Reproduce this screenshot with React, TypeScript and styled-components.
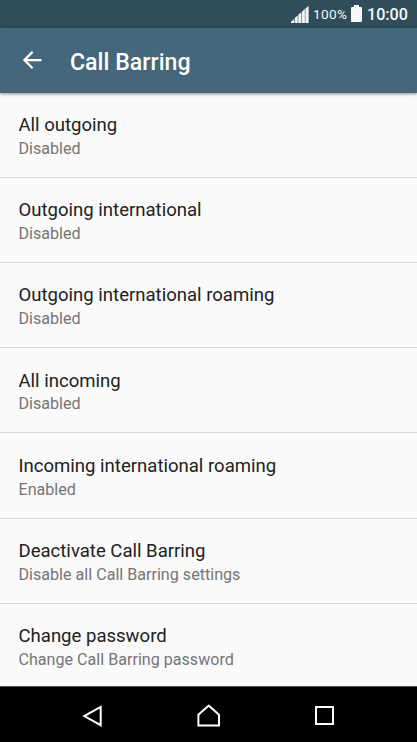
import React from 'react';
import styled, { createGlobalStyle } from 'styled-components';

const GlobalStyle = createGlobalStyle`
  * { box-sizing: border-box; }
  html, body { margin: 0; padding: 0; }
  body { background: #fafafa; font-family: Roboto, "Noto Sans", sans-serif; }
`;

const Screen = styled.div`
  display: flex;
  flex-direction: column;
  width: 417px;
  height: 742px;
  overflow: hidden;
  background: #fafafa;
`;

const StatusBar = styled.div`
  display: flex;
  flex: none;
  align-items: center;
  justify-content: flex-end;
  height: 28px;
  padding-right: 9px;
  background: #2f4d5a;
  color: #f4f8fa;
`;

const SignalIcon = styled.svg`
  width: 18px;
  height: 28px;
  margin-right: 4px;
`;

const BatteryLevel = styled.span`
  width: 34px;
  margin-right: 4px;
  font-size: 13.6px;
  line-height: 28px;
  letter-spacing: 0.35px;
  white-space: nowrap;
`;

const BatteryIcon = styled.svg`
  width: 11px;
  height: 28px;
  margin-right: 5px;
`;

const Clock = styled.span`
  width: 41px;
  padding-top: 2px;
  font-size: 16.1px;
  font-weight: 500;
  line-height: 28px;
  white-space: nowrap;
`;

const AppBar = styled.header`
  display: flex;
  flex: none;
  align-items: center;
  height: 64.7px;
  padding-left: 18px;
  background: #44677b;
  color: #fff;
  box-shadow: 0 1px 3px rgba(0, 0, 0, 0.45);
  z-index: 1;
`;

const BackButton = styled.button`
  display: flex;
  width: 28px;
  height: 28px;
  margin: 0 24px 0 0;
  padding: 0;
  border: 0;
  background: none;
  color: inherit;
`;

const Heading = styled.h1`
  margin: 5px 0 0;
  font-size: 23.16px;
  font-weight: 500;
  line-height: 28px;
`;

const SettingsList = styled.ul`
  flex: 1;
  min-height: 0;
  margin: 0;
  padding: 0;
  overflow: hidden;
  list-style: none;
`;

const SettingRow = styled.li`
  height: 85.2px;
  padding: 21.3px 18.5px 0;
  border-bottom: 1px solid #dadada;
`;

const SettingTitle = styled.div`
  color: #212121;
  font-size: 18.56px;
  line-height: 22px;
`;

const SettingSummary = styled.div`
  margin-top: 2.9px;
  color: #757575;
  font-size: 16.13px;
  line-height: 19px;
`;

const NavigationBar = styled.nav`
  display: flex;
  flex: none;
  justify-content: center;
  height: 56px;
  border-top: 1px solid #555;
  background: #000;
`;

const NavButton = styled.button`
  display: flex;
  align-items: center;
  justify-content: center;
  width: 116px;
  height: 55px;
  padding: 0;
  border: 0;
  background: none;
  color: #fff;
`;

const settings = [
  { title: 'All outgoing', summary: 'Disabled' },
  { title: 'Outgoing international', summary: 'Disabled' },
  { title: 'Outgoing international roaming', summary: 'Disabled' },
  { title: 'All incoming', summary: 'Disabled' },
  { title: 'Incoming international roaming', summary: 'Enabled' },
  { title: 'Deactivate Call Barring', summary: 'Disable all Call Barring settings' },
  { title: 'Change password', summary: 'Change Call Barring password' },
];

const navItems = [
  { label: 'Back', path: 'M22.7 7v18.2L6.3 16.1z' },
  { label: 'Home', path: 'M4.4 25.5V14.7L14.7 5.6l10.3 9.1v10.8z' },
  { label: 'Recent apps', path: 'M6 7h17v17H6z' },
];

export default function App() {
  return (
    <Screen>
      <GlobalStyle />
      <StatusBar>
        <SignalIcon viewBox="0 0 18 28" fill="currentColor">
          <path d="M0 23v-1.2l3-2.6V23zM3.7 23v-5l3-2.6V23zM7.3 23v-8.2l3-2.6V23zM10.9 23V11.7l3-2.6V23zM14.4 23V8.5L17.6 6V23z" />
        </SignalIcon>
        <BatteryLevel>100%</BatteryLevel>
        <BatteryIcon viewBox="0 0 11 28" fill="currentColor">
          <path d="M3 5h5v2h2q1 0 1 1v13q0 1-1 1H1q-1 0-1-1V8q0-1 1-1h2z" />
        </BatteryIcon>
        <Clock>10:00</Clock>
      </StatusBar>
      <AppBar>
        <BackButton aria-label="Navigate up">
          <svg width="28" height="28" viewBox="0 0 28 28" fill="none" stroke="currentColor" strokeWidth="2.2">
            <path d="M23.5 14.1H6M14.6 5.9l-8.2 8.2 8.2 8.2" />
          </svg>
        </BackButton>
        <Heading>Call Barring</Heading>
      </AppBar>
      <SettingsList>
        {settings.map((item) => (
          <SettingRow key={item.title}>
            <SettingTitle>{item.title}</SettingTitle>
            <SettingSummary>{item.summary}</SettingSummary>
          </SettingRow>
        ))}
      </SettingsList>
      <NavigationBar>
        {navItems.map((item) => (
          <NavButton key={item.label} aria-label={item.label}>
            <svg width="30" height="30" viewBox="0 0 30 30" fill="none" stroke="currentColor" strokeWidth="2">
              <path d={item.path} />
            </svg>
          </NavButton>
        ))}
      </NavigationBar>
    </Screen>
  );
}
